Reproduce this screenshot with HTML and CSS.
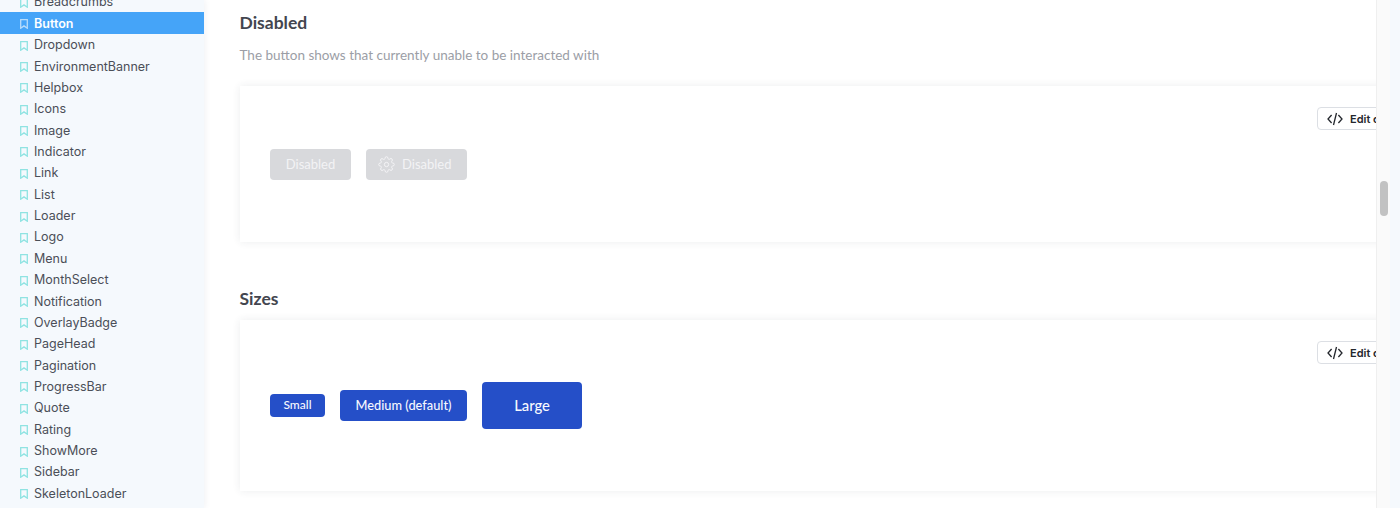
FILE: index.html
```html
<!DOCTYPE html>
<html lang="en">
<head>
    <meta charset="UTF-8">
    <title>Button</title>
    <link rel="stylesheet" href="styles.css">
</head>
<body>

<svg class="defs" width="0" height="0">
    <symbol id="mark" viewBox="0 0 8 10">
        <path d="M.7.7h6.600v8.500L4 6.900.7 9.200z" fill="none" stroke="currentColor" stroke-width="1.300"/>
    </symbol>
    <symbol id="code" viewBox="0 0 16 14">
        <path d="M4.600 3 1 7l3.600 4M11.400 3 15 7l-3.600 4M9.500 1 6.500 13" fill="none" stroke="currentColor" stroke-width="1.300"/>
    </symbol>
</svg>

<nav class="sidebar">
    <a class="nav-item"><svg class="mark"><use href="#mark"/></svg>Breadcrumbs</a>
    <a class="nav-item active"><svg class="mark"><use href="#mark"/></svg>Button</a>
    <a class="nav-item"><svg class="mark"><use href="#mark"/></svg>Dropdown</a>
    <a class="nav-item"><svg class="mark"><use href="#mark"/></svg>EnvironmentBanner</a>
    <a class="nav-item"><svg class="mark"><use href="#mark"/></svg>Helpbox</a>
    <a class="nav-item"><svg class="mark"><use href="#mark"/></svg>Icons</a>
    <a class="nav-item"><svg class="mark"><use href="#mark"/></svg>Image</a>
    <a class="nav-item"><svg class="mark"><use href="#mark"/></svg>Indicator</a>
    <a class="nav-item"><svg class="mark"><use href="#mark"/></svg>Link</a>
    <a class="nav-item"><svg class="mark"><use href="#mark"/></svg>List</a>
    <a class="nav-item"><svg class="mark"><use href="#mark"/></svg>Loader</a>
    <a class="nav-item"><svg class="mark"><use href="#mark"/></svg>Logo</a>
    <a class="nav-item"><svg class="mark"><use href="#mark"/></svg>Menu</a>
    <a class="nav-item"><svg class="mark"><use href="#mark"/></svg>MonthSelect</a>
    <a class="nav-item"><svg class="mark"><use href="#mark"/></svg>Notification</a>
    <a class="nav-item"><svg class="mark"><use href="#mark"/></svg>OverlayBadge</a>
    <a class="nav-item"><svg class="mark"><use href="#mark"/></svg>PageHead</a>
    <a class="nav-item"><svg class="mark"><use href="#mark"/></svg>Pagination</a>
    <a class="nav-item"><svg class="mark"><use href="#mark"/></svg>ProgressBar</a>
    <a class="nav-item"><svg class="mark"><use href="#mark"/></svg>Quote</a>
    <a class="nav-item"><svg class="mark"><use href="#mark"/></svg>Rating</a>
    <a class="nav-item"><svg class="mark"><use href="#mark"/></svg>ShowMore</a>
    <a class="nav-item"><svg class="mark"><use href="#mark"/></svg>Sidebar</a>
    <a class="nav-item"><svg class="mark"><use href="#mark"/></svg>SkeletonLoader</a>
</nav>

<main class="content">
    <div class="page">
        <h2 class="title">Disabled</h2>
        <p class="desc">The button shows that currently unable to be interacted with</p>
        <section class="card card-disabled">
            <button class="edit"><svg class="edit-icon"><use href="#code"/></svg>Edit code</button>
            <div class="demo">
                <button class="btn off">Disabled</button>
                <button class="btn off with-icon">
                    <svg class="gear" viewBox="0 0 24 24" fill="none" stroke="currentColor" stroke-width="1.400">
                        <circle cx="12" cy="12" r="3"/>
                        <path d="M19.400 15a1.650 1.650 0 0 0 .33 1.820l.06.06a2 2 0 0 1 0 2.830 2 2 0 0 1-2.830 0l-.06-.06a1.650 1.650 0 0 0-1.820-.33 1.650 1.650 0 0 0-1 1.510V21a2 2 0 0 1-2 2 2 2 0 0 1-2-2v-.09A1.650 1.650 0 0 0 9 19.400a1.650 1.650 0 0 0-1.820.33l-.06.06a2 2 0 0 1-2.830 0 2 2 0 0 1 0-2.830l.06-.06a1.650 1.650 0 0 0 .33-1.820 1.650 1.650 0 0 0-1.510-1H3a2 2 0 0 1-2-2 2 2 0 0 1 2-2h.09A1.650 1.650 0 0 0 4.600 9a1.650 1.650 0 0 0-.33-1.820l-.06-.06a2 2 0 0 1 0-2.830 2 2 0 0 1 2.830 0l.06.06a1.650 1.650 0 0 0 1.820.33H9a1.650 1.650 0 0 0 1-1.510V3a2 2 0 0 1 2-2 2 2 0 0 1 2 2v.09a1.650 1.650 0 0 0 1 1.510 1.650 1.650 0 0 0 1.820-.33l.06-.06a2 2 0 0 1 2.830 0 2 2 0 0 1 0 2.830l-.06.06a1.650 1.650 0 0 0-.33 1.820V9a1.650 1.650 0 0 0 1.510 1H21a2 2 0 0 1 2 2 2 2 0 0 1-2 2h-.09a1.650 1.650 0 0 0-1.510 1z"/>
                    </svg>
                    Disabled
                </button>
            </div>
        </section>

        <h2 class="title title-sizes">Sizes</h2>
        <section class="card card-sizes">
            <button class="edit"><svg class="edit-icon"><use href="#code"/></svg>Edit code</button>
            <div class="demo">
                <button class="btn primary small">Small</button>
                <button class="btn primary">Medium (default)</button>
                <button class="btn primary large">Large</button>
            </div>
        </section>
    </div>
</main>

<div class="scrollbar"><div class="thumb"></div></div>
<div class="gutter"></div>

</body>
</html>
```

FILE: styles.css
```css
html, body { height: 100%; }
body {
    margin: 0;
    height: 508px;
    overflow: hidden;
    display: flex;
    background: #f5f9fd;
    font-family: Lato, sans-serif;
}
.defs { position: absolute; }

.sidebar {
    width: 204px;
    flex-shrink: 0;
    height: 508px;
    overflow: hidden;
    background: #f5f9fd;
    box-shadow: 1px 0 6px rgba(60,80,120,0.08);
    font-family: Inter, sans-serif;
    z-index: 1;
}
.nav-item {
    display: flex;
    align-items: center;
    box-sizing: border-box;
    height: 21.36px;
    padding: 0.6px 0 0 20px;
    font-size: 12.5px;
    color: #4b4f58;
    white-space: nowrap;
}
.nav-item:first-child { margin-top: -9px; }
.mark { width: 8px; height: 10px; margin-right: 6px; margin-top: 2px; color: #8fe3e2; flex-shrink: 0; }
.nav-item.active { background: #45a4f8; color: #fff; font-weight: 600; }
.nav-item.active .mark { color: #b7dcfb; }

.content {
    width: 1172px;
    flex-shrink: 0;
    height: 508px;
    overflow: hidden;
    background: #fff;
}
.page { width: 1300px; padding: 13px 0 0 36px; }

.title { margin: 0 0 0 -0.5px; font-size: 17.5px; line-height: 20px; font-weight: 700; color: #43464f; }
.title-sizes { margin-top: 47px; }
.desc { margin: 12px 0 0 -0.5px; font-size: 13.5px; line-height: 20px; color: #9b9ea6; }

.card {
    position: relative;
    background: #fff;
    box-shadow: 0 0 8px rgba(40,50,70,0.09);
    padding: 0 30px;
    display: flex;
    align-items: center;
}
.card-disabled { height: 156px; margin-top: 21px; }
.card-sizes { height: 171px; margin-top: 11px; }

.demo { display: flex; align-items: center; gap: 15px; }
.card-sizes .demo { margin-top: -1px; }

.btn {
    height: 31px;
    padding: 0;
    border: none;
    border-radius: 4px;
    font-family: Lato, sans-serif;
    font-size: 13px;
    display: flex;
    align-items: center;
    justify-content: center;
}
.off { width: 81px; background: #d8d9dc; color: #f3f3f5; }
.off.with-icon { width: 101px; gap: 7px; justify-content: flex-start; padding-left: 12px; }
.gear { width: 17px; height: 17px; flex-shrink: 0; }
.primary { background: #254fc8; color: #f6f8fe; font-weight: 500; width: 127px; font-size: 12.8px; }
.primary.small { width: 55px; height: 23px; font-size: 12px; padding-bottom: 2px; }
.primary.large { width: 100px; height: 47px; font-size: 14.8px; }

.edit {
    position: absolute;
    top: 21px;
    left: 1077px;
    height: 23px;
    width: 100px;
    padding: 0 0 0 9px;
    display: flex;
    align-items: center;
    gap: 7px;
    background: #fff;
    border: 1px solid #dcdfe4;
    border-radius: 4px;
    font-family: Inter, sans-serif;
    font-size: 11px;
    font-weight: 600;
    color: #24272d;
    white-space: nowrap;
}
.edit-icon { width: 16px; height: 14px; flex-shrink: 0; }

.scrollbar {
    width: 14px;
    flex-shrink: 0;
    height: 508px;
    background: #fafafa;
    border-left: 1px solid #efefef;
    box-sizing: border-box;
    padding: 181px 2px 0 3px;
}
.thumb { height: 35px; border-radius: 4px; background: #c2c2c2; }
.gutter { flex: 1; background: #f5f9fd; }
```
